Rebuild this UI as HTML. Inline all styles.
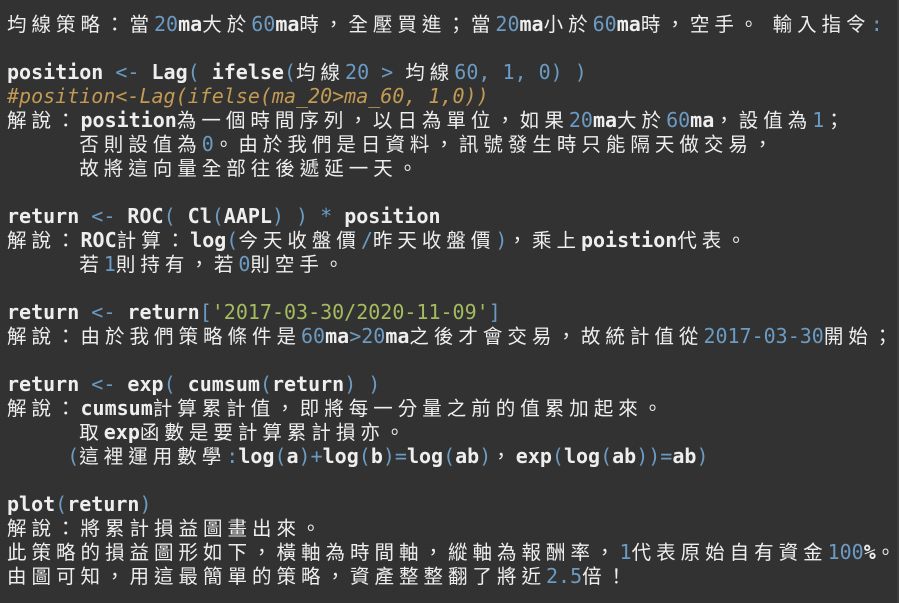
<!DOCTYPE html>
<html><head><meta charset="utf-8"><style>
html,body{margin:0;padding:0;background:#323232;width:899px;height:603px;overflow:hidden}
.r{position:absolute;right:0;top:0;width:2px;height:603px;background:#3d3d3d}
pre{margin:0;padding:12px 0 0 7px;font-family:"DejaVu Sans Mono","Liberation Mono",monospace;font-size:20px;line-height:24px;color:#eeeeee;font-weight:bold;white-space:pre}
.c{font-family:"Noto Sans CJK TC","WenQuanYi Zen Hei",sans-serif;font-weight:normal;letter-spacing:5px;font-size:19.5px;line-height:0}
.b{color:#6b9bc3;font-weight:normal}
.bb{color:#6b9bc3;font-weight:normal}
.m{color:#c39a54;font-style:italic;font-weight:normal}
.g{color:#a4bb60;font-weight:normal}
</style></head><body><div class="r"></div><pre><span class="c">均線策略：當</span><span class="b">20</span>ma<span class="c">大於</span><span class="b">60</span>ma<span class="c">時，全壓買進；當</span><span class="b">20</span>ma<span class="c">小於</span><span class="b">60</span>ma<span class="c">時，空手。 輸入指令</span><span class="b">:</span>

position <span class="b">&lt;-</span> Lag<span class="b">(</span> ifelse<span class="b">(</span><span class="c">均線</span><span class="b">20 &gt;</span> <span class="c">均線</span><span class="b">60, 1, 0) )</span>
<span class="m">#position&lt;-Lag(ifelse(ma_20&gt;ma_60, 1,0))</span>
<span class="c">解說：</span>position<span class="c">為一個時間序列，以日為單位，如果</span><span class="b">20</span>ma<span class="c">大於</span><span class="b">60</span>ma<span class="c">，設值為</span><span class="b">1</span><span class="c">；</span>
      <span class="c">否則設值為</span><span class="b">0</span><span class="c">。由於我們是日資料，訊號發生時只能隔天做交易，</span>
      <span class="c">故將這向量全部往後遞延一天。</span>

return <span class="b">&lt;-</span> ROC<span class="b">(</span> Cl<span class="b">(</span>AAPL<span class="b">) )</span> <span class="b">*</span> position
<span class="c">解說：</span>ROC<span class="c">計算：</span>log<span class="b">(</span><span class="c">今天收盤價</span><span class="b">/</span><span class="c">昨天收盤價</span><span class="b">)</span><span class="c">，乘上</span>poistion<span class="c">代表。</span>
      <span class="c">若</span><span class="b">1</span><span class="c">則持有，若</span><span class="b">0</span><span class="c">則空手。</span>

return <span class="b">&lt;-</span> return<span class="b">[</span><span class="g">'2017-03-30/2020-11-09'</span><span class="b">]</span>
<span class="c">解說：由於我們策略條件是</span><span class="b">60</span>ma<span class="b">&gt;20</span>ma<span class="c">之後才會交易，故統計值從</span><span class="bb">2017-03-30</span><span class="c">開始；</span>

return <span class="b">&lt;-</span> exp<span class="b">(</span> cumsum<span class="b">(</span>return<span class="b">) )</span>
<span class="c">解說：</span>cumsum<span class="c">計算累計值，即將每一分量之前的值累加起來。</span>
      <span class="c">取</span>exp<span class="c">函數是要計算累計損亦。</span>
     <span class="b">(</span><span class="c">這裡運用數學</span><span class="b">:</span>log<span class="b">(</span>a<span class="b">)+</span>log<span class="b">(</span>b<span class="b">)=</span>log<span class="b">(</span>ab<span class="b">)</span><span class="c">，</span>exp<span class="b">(</span>log<span class="b">(</span>ab<span class="b">))=</span>ab<span class="b">)</span>

plot<span class="b">(</span>return<span class="b">)</span>
<span class="c">解說：將累計損益圖畫出來。</span>
<span class="c">此策略的損益圖形如下，橫軸為時間軸，縱軸為報酬率，</span><span class="b">1</span><span class="c">代表原始自有資金</span><span class="bb">100</span>%<span class="c">。</span>
<span class="c">由圖可知，用這最簡單的策略，資產整整翻了將近</span><span class="b">2.5</span><span class="c">倍！</span></pre></body></html>
